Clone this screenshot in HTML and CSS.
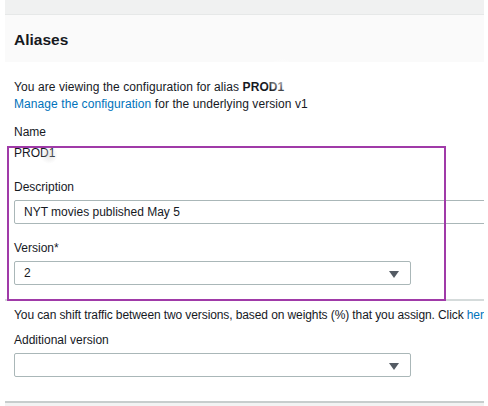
FILE: index.html
```html
<!DOCTYPE html>
<html>
<head>
<meta charset="utf-8">
<link rel="stylesheet" href="styles.css">
</head>
<body>
<div class="panel">
  <div class="topband"></div>
  <div class="header"><h2 class="title">Aliases</h2></div>
  <div class="content">
    <p class="intro">You are viewing the configuration for alias <b>PROD1</b><br><a class="link">Manage the configuration</a> for the underlying version v1</p>
    <div class="label name-label">Name</div>
    <div class="value">PROD1</div>
    <div class="label desc-label">Description</div>
    <div class="input wide">NYT movies published May 5</div>
    <div class="label ver-label">Version*</div>
    <div class="input select">2<span class="arrow"></span></div>
    <div class="sep"></div>
    <p class="hint">You can shift traffic between two versions, based on weights (%) that you assign. Click <a class="link">here</a></p>
    <div class="label add-label">Additional version</div>
    <div class="input select"><span class="arrow"></span></div>
  </div>
  <div class="footer"></div>
</div>
<div class="highlight"></div>
<div class="smudge smudge-a"></div>
<div class="smudge smudge-b"></div>
</body>
</html>
```
FILE: styles.css
```css
html, body {
  margin: 0;
  padding: 0;
  background: #ffffff;
}
body {
  font-family: "Liberation Sans", Arial, sans-serif;
  font-size: 12px;
  color: #16191f;
  position: relative;
  height: 406px;
  overflow: hidden;
}
.panel {
  margin-left: 5px;
  width: 479px;
  overflow: hidden;
}
.topband {
  height: 14px;
  background: #f0f1f1;
  border-bottom: 1px solid #e6e8e8;
}
.header {
  height: 47px;
  background: #fafafa;
  display: flex;
  align-items: center;
  padding-left: 9px;
}
.title {
  margin: 0;
  font-size: 15.5px;
  font-weight: bold;
  color: #16191f;
  position: relative;
  top: 1px;
}
.content {
  padding: 17px 0 0 9px;
}
.intro {
  margin: 0;
  line-height: 17px;
  letter-spacing: 0.08px;
}
.link {
  color: #0073bb;
  text-decoration: none;
}
.label, .value {
  line-height: 17px;
}
.name-label { margin-top: 11px; }
.value { margin-top: 4px; }
.desc-label { margin-top: 17px; }
.ver-label { margin-top: 16px; }
.add-label { margin-top: 8px; }
.input {
  box-sizing: border-box;
  height: 24px;
  border: 1px solid #aab7b8;
  border-radius: 2px;
  margin-top: 4px;
  padding-left: 9px;
  display: flex;
  align-items: center;
  position: relative;
  background: #fff;
}
.wide {
  width: 520px;
}
.select {
  width: 397px;
}
.arrow {
  position: absolute;
  right: 11px;
  top: 9px;
  width: 0;
  height: 0;
  border-left: 5px solid transparent;
  border-right: 5px solid transparent;
  border-top: 7px solid #545b64;
}
.sep {
  height: 2px;
  background: #d5dbdb;
  margin-top: 14px;
  margin-left: -9px;
}
.hint {
  margin: 6px 0 0 0;
  line-height: 17px;
  white-space: nowrap;
  letter-spacing: -0.1px;
}
.footer {
  margin-top: 24px;
  height: 2px;
  background: #c7cdcd;
  border-bottom: 10px solid #f2f3f3;
}
.highlight {
  position: absolute;
  left: 7px;
  top: 146px;
  width: 435px;
  height: 151px;
  border: 2px solid #a03aa8;
}
.smudge {
  position: absolute;
  border-radius: 50%;
}
.smudge-a {
  left: 262px;
  top: 58px;
  width: 40px;
  height: 36px;
  background: radial-gradient(circle, rgba(255,255,255,0.9) 0%, rgba(255,255,255,0) 70%);
}
.smudge-b {
  left: 40px;
  top: 146px;
  width: 18px;
  height: 18px;
  background: radial-gradient(circle, rgba(200,200,200,0.45) 0%, rgba(200,200,200,0) 70%);
}
```
